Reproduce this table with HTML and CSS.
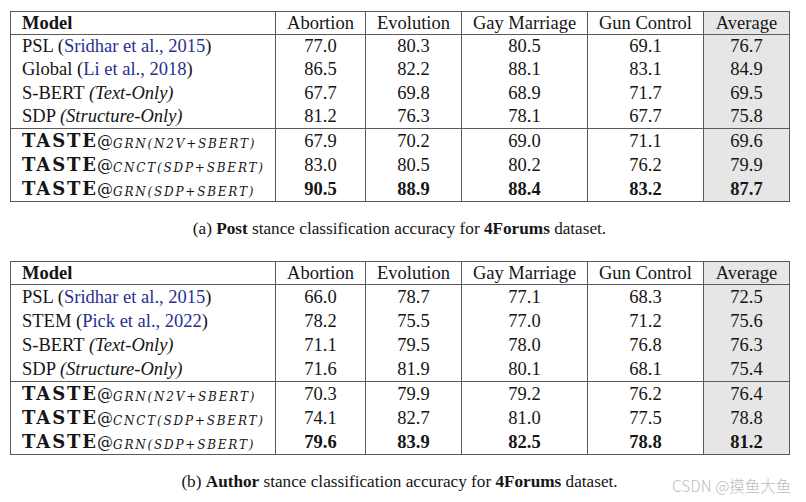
FILE: index.html
```html
<!DOCTYPE html>
<html lang="en">
<head>
<meta charset="utf-8">
<title>4Forums stance classification accuracy</title>
<link rel="stylesheet" href="styles.css">
</head>
<body>
<div class="page">
  <section class="figure">
    <table class="results tight">
      <colgroup>
        <col class="c-model"><col class="c-abo"><col class="c-evo"><col class="c-gay"><col class="c-gun"><col class="c-avg">
      </colgroup>
      <thead>
        <tr><th class="model">Model</th><th>Abortion</th><th>Evolution</th><th>Gay Marriage</th><th>Gun Control</th><th class="avg">Average</th></tr>
      </thead>
      <tbody class="baselines">
        <tr><td class="model">PSL (<span class="cite">Sridhar et al., 2015</span>)</td><td>77.0</td><td>80.3</td><td>80.5</td><td>69.1</td><td class="avg">76.7</td></tr>
        <tr><td class="model">Global (<span class="cite">Li et al., 2018</span>)</td><td>86.5</td><td>82.2</td><td>88.1</td><td>83.1</td><td class="avg">84.9</td></tr>
        <tr><td class="model">S-BERT <i>(Text-Only)</i></td><td>67.7</td><td>69.8</td><td>68.9</td><td>71.7</td><td class="avg">69.5</td></tr>
        <tr><td class="model">SDP <i>(Structure-Only)</i></td><td>81.2</td><td>76.3</td><td>78.1</td><td>67.7</td><td class="avg">75.8</td></tr>
      </tbody>
      <tbody class="taste">
        <tr><td class="model"><span class="tname">TASTE</span><span class="at">@</span><span class="sub">GRN(N2V+SBERT)</span></td><td>67.9</td><td>70.2</td><td>69.0</td><td>71.1</td><td class="avg">69.6</td></tr>
        <tr><td class="model"><span class="tname">TASTE</span><span class="at">@</span><span class="sub">CNCT(SDP+SBERT)</span></td><td>83.0</td><td>80.5</td><td>80.2</td><td>76.2</td><td class="avg">79.9</td></tr>
        <tr class="best"><td class="model"><span class="tname">TASTE</span><span class="at">@</span><span class="sub">GRN(SDP+SBERT)</span></td><td>90.5</td><td>88.9</td><td>88.4</td><td>83.2</td><td class="avg">87.7</td></tr>
      </tbody>
    </table>
    <p class="caption">(a) <b>Post</b> stance classification accuracy for <b>4Forums</b> dataset.</p>
  </section>

  <section class="figure">
    <table class="results">
      <colgroup>
        <col class="c-model"><col class="c-abo"><col class="c-evo"><col class="c-gay"><col class="c-gun"><col class="c-avg">
      </colgroup>
      <thead>
        <tr><th class="model">Model</th><th>Abortion</th><th>Evolution</th><th>Gay Marriage</th><th>Gun Control</th><th class="avg">Average</th></tr>
      </thead>
      <tbody class="baselines">
        <tr><td class="model">PSL (<span class="cite">Sridhar et al., 2015</span>)</td><td>66.0</td><td>78.7</td><td>77.1</td><td>68.3</td><td class="avg">72.5</td></tr>
        <tr><td class="model">STEM (<span class="cite">Pick et al., 2022</span>)</td><td>78.2</td><td>75.5</td><td>77.0</td><td>71.2</td><td class="avg">75.6</td></tr>
        <tr><td class="model">S-BERT <i>(Text-Only)</i></td><td>71.1</td><td>79.5</td><td>78.0</td><td>76.8</td><td class="avg">76.3</td></tr>
        <tr><td class="model">SDP <i>(Structure-Only)</i></td><td>71.6</td><td>81.9</td><td>80.1</td><td>68.1</td><td class="avg">75.4</td></tr>
      </tbody>
      <tbody class="taste">
        <tr><td class="model"><span class="tname">TASTE</span><span class="at">@</span><span class="sub">GRN(N2V+SBERT)</span></td><td>70.3</td><td>79.9</td><td>79.2</td><td>76.2</td><td class="avg">76.4</td></tr>
        <tr><td class="model"><span class="tname">TASTE</span><span class="at">@</span><span class="sub">CNCT(SDP+SBERT)</span></td><td>74.1</td><td>82.7</td><td>81.0</td><td>77.5</td><td class="avg">78.8</td></tr>
        <tr class="best"><td class="model"><span class="tname">TASTE</span><span class="at">@</span><span class="sub">GRN(SDP+SBERT)</span></td><td>79.6</td><td>83.9</td><td>82.5</td><td>78.8</td><td class="avg">81.2</td></tr>
      </tbody>
    </table>
    <p class="caption">(b) <b>Author</b> stance classification accuracy for <b>4Forums</b> dataset.</p>
  </section>

  <div class="watermark">CSDN @摸鱼大鱼</div>
</div>
</body>
</html>
```

FILE: styles.css
```css
html, body {
  margin: 0;
  padding: 0;
  background: #ffffff;
}

body {
  font-family: "Liberation Serif", "Times New Roman", serif;
  color: #151515;
}

.page {
  position: relative;
  width: 806px;
  height: 502px;
  padding: 11px 0 0 10px;
  box-sizing: border-box;
  overflow: hidden;
}

.figure {
  width: 779px;
}

.results {
  border-collapse: collapse;
  table-layout: fixed;
  width: 779px;
  border: 1px solid #5a5a5a;
}

.c-model { width: 265px; }
.c-abo { width: 90px; }
.c-evo { width: 96px; }
.c-gay { width: 126px; }
.c-gun { width: 116px; }
.c-avg { width: 86px; }

.results th,
.results td {
  padding: 0;
  height: 24px;
  line-height: 24px;
  font-size: 18.5px;
  font-weight: normal;
  text-align: center;
  border-left: 1px solid #5a5a5a;
  border-right: 1px solid #5a5a5a;
  white-space: nowrap;
  box-sizing: border-box;
}

.results thead th {
  height: 23px;
  line-height: 22px;
  border-bottom: 1px solid #5a5a5a;
}

.results th.model {
  font-weight: bold;
}

.results .model {
  text-align: left;
  padding-left: 11px;
}

.tight tbody.baselines td {
  height: 23.5px;
  line-height: 23px;
}

.results tbody.taste tr:first-child td {
  border-top: 1px solid #5a5a5a;
}

.results .avg {
  background: #e6e6e6;
}

.results tr.best td {
  font-weight: bold;
}

.cite {
  color: #27308f;
}

.tname,
.at,
.sub {
  line-height: 1;
}

.tname {
  font-family: "DejaVu Serif", serif;
  font-weight: bold;
  font-size: 18px;
  letter-spacing: 1.9px;
}

.at {
  font-family: "DejaVu Serif", serif;
  font-weight: normal;
  font-size: 16px;
  margin-left: -1px;
}

.sub {
  font-family: "DejaVu Serif", serif;
  font-style: italic;
  font-weight: normal;
  font-size: 12px;
  letter-spacing: 1.8px;
  position: relative;
  top: 1px;
}

.caption {
  margin: 17px 0 22px 0;
  font-size: 17.2px;
  line-height: 20px;
  text-align: center;
}

.watermark {
  position: absolute;
  left: 672px;
  top: 474px;
  font-family: "Noto Sans CJK SC", "Noto Sans", sans-serif;
  font-size: 15.5px;
  font-weight: 300;
  color: #bdbdbd;
  white-space: nowrap;
}
```
